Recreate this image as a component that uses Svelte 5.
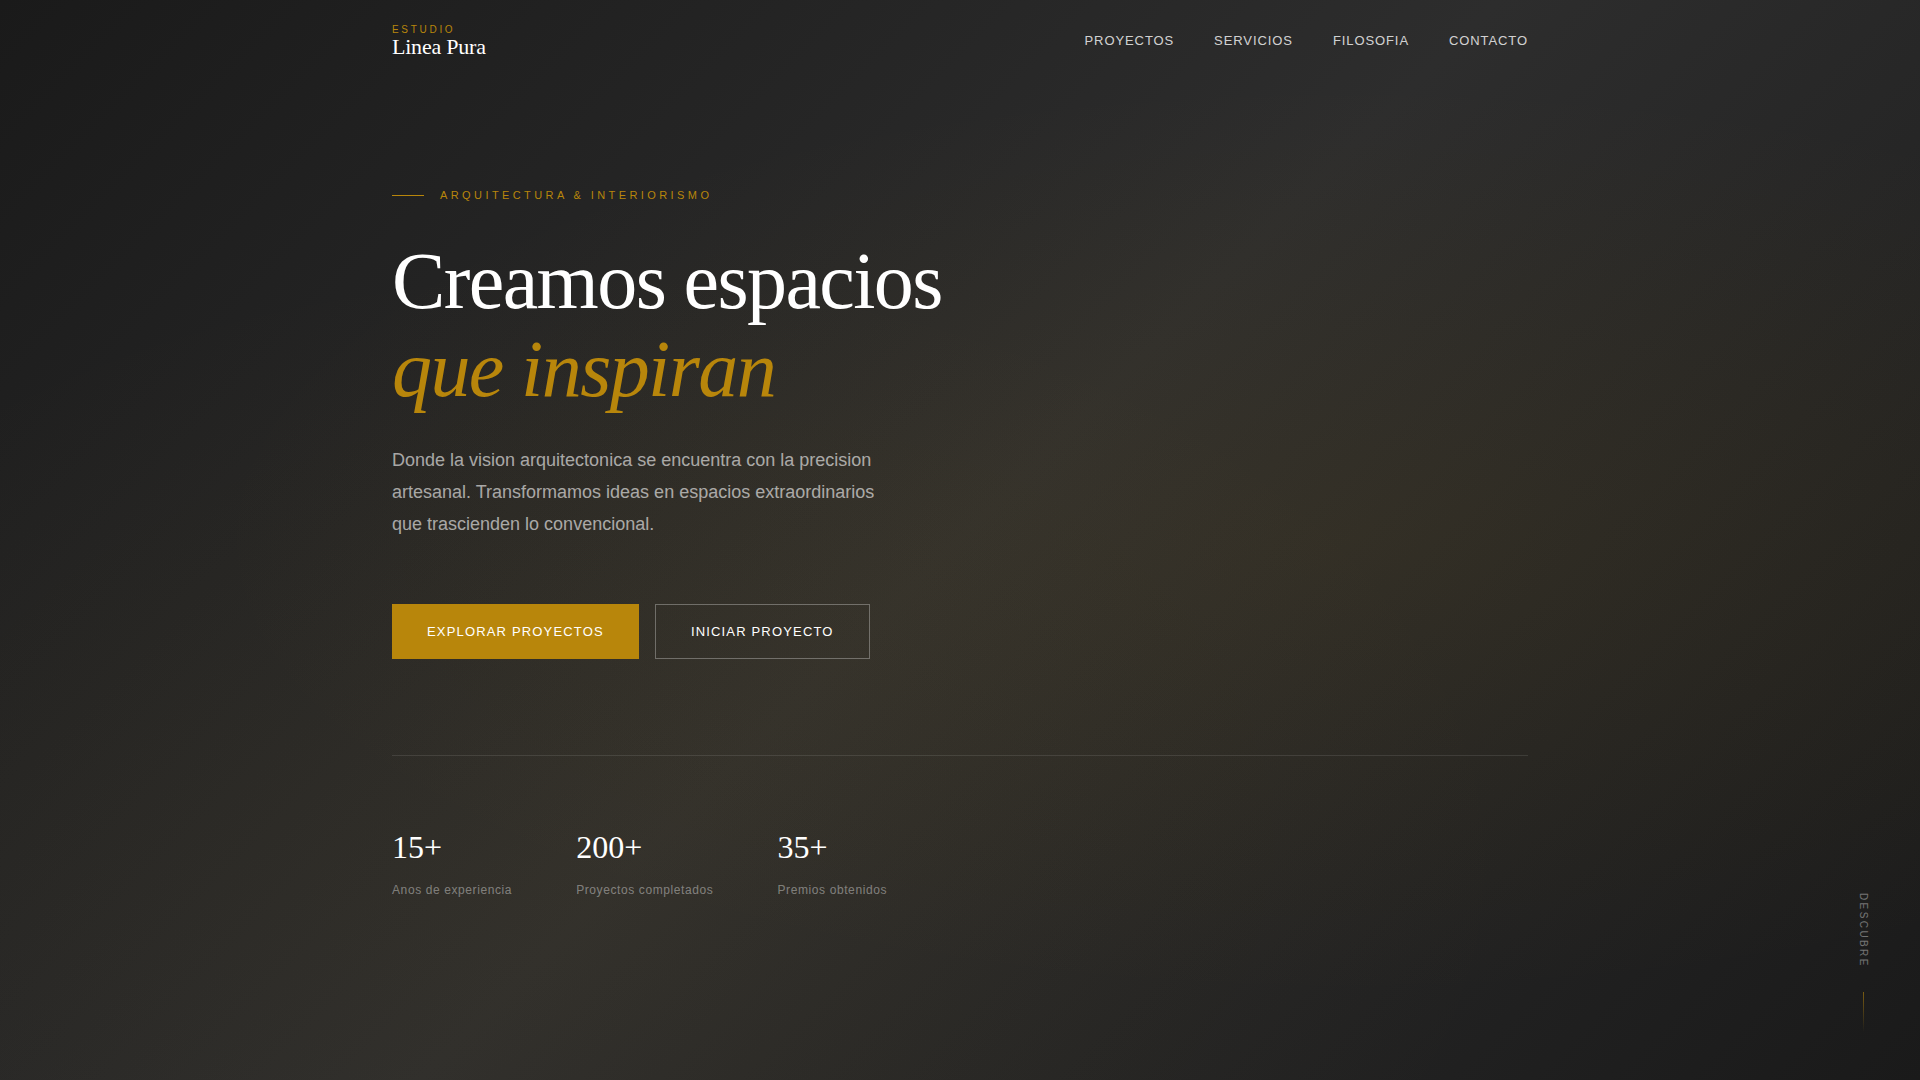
<script>
  const links = [
    { label: 'Proyectos', href: '#proyectos' },
    { label: 'Servicios', href: '#servicios' },
    { label: 'Filosofia', href: '#filosofia' },
    { label: 'Contacto', href: '#contacto' },
  ];

  const stats = [
    { value: '15+', label: 'Anos de experiencia' },
    { value: '200+', label: 'Proyectos completados' },
    { value: '35+', label: 'Premios obtenidos' },
  ];
</script>

<div class="page">
  <header class="bar">
    <a class="logo" href="#inicio">
      <span class="logo-over">Estudio</span>
      <span class="logo-name">Linea Pura</span>
    </a>
    <nav class="nav" aria-label="Principal">
      {#each links as link}
        <a href={link.href}>{link.label}</a>
      {/each}
    </nav>
  </header>

  <main class="hero" id="inicio">
    <p class="eyebrow">Arquitectura &amp; Interiorismo</p>
    <h1>Creamos espacios<br /><em>que inspiran</em></h1>
    <p class="lead">
      Donde la vision arquitectonica se encuentra con la precision artesanal.
      Transformamos ideas en espacios extraordinarios que trascienden lo convencional.
    </p>
    <div class="actions">
      <a class="btn primary" href="#proyectos">Explorar proyectos</a>
      <a class="btn outline" href="#contacto">Iniciar proyecto</a>
    </div>
    <dl class="stats">
      {#each stats as stat}
        <div class="stat">
          <dt>{stat.label}</dt>
          <dd>{stat.value}</dd>
        </div>
      {/each}
    </dl>
  </main>

  <div class="scroll">
    <span>Descubre</span>
    <i class="scroll-line"></i>
  </div>
</div>

<style>
  :global(body) {
    margin: 0;
    background: #1a1a1a;
  }

  .page {
    --gold: #b8860b;
    --serif: 'Liberation Serif', 'Times New Roman', serif;
    position: relative;
    display: flex;
    flex-direction: column;
    box-sizing: border-box;
    min-height: 100vh;
    color: #fff;
    font-family: 'Liberation Sans', Arial, sans-serif;
    background:
      radial-gradient(ellipse at 70% 50%, rgba(184, 134, 11, 0.08) 0%, transparent 60%),
      radial-gradient(ellipse at 30% 80%, rgba(184, 134, 11, 0.05) 0%, transparent 50%),
      linear-gradient(135deg, #1a1a1a 0%, #2d2d2d 50%, #1a1a1a 100%);
  }

  a {
    color: inherit;
    text-decoration: none;
  }

  .bar,
  .hero {
    box-sizing: border-box;
    width: 100%;
    max-width: 1200px;
    margin: 0 auto;
    padding: 0 32px;
  }

  .bar {
    display: flex;
    align-items: center;
    justify-content: space-between;
    padding-top: 24px;
    padding-bottom: 24px;
  }

  .logo {
    display: flex;
    flex-direction: column;
  }

  .logo-over {
    color: var(--gold);
    font-size: 10px;
    line-height: 12px;
    letter-spacing: 0.27em;
    text-transform: uppercase;
  }

  .logo-name {
    font-family: var(--serif);
    font-size: 22px;
    line-height: 22px;
    letter-spacing: -0.01em;
  }

  .nav {
    display: flex;
    gap: 40px;
    color: rgba(255, 255, 255, 0.8);
    font-size: 13px;
    line-height: 20px;
    letter-spacing: 0.07em;
    text-transform: uppercase;
  }

  .hero {
    display: flex;
    flex: 1;
    flex-direction: column;
    justify-content: center;
    padding-bottom: 77px;
  }

  .eyebrow {
    display: flex;
    align-items: center;
    gap: 16px;
    margin: 0 0 32px;
    color: var(--gold);
    font-size: 11px;
    line-height: 20px;
    letter-spacing: 0.31em;
    text-transform: uppercase;
  }

  .eyebrow::before {
    width: 32px;
    height: 1px;
    background: var(--gold);
    content: '';
  }

  h1 {
    margin: 0 0 31px;
    font-family: var(--serif);
    font-size: 80px;
    font-weight: 400;
    line-height: 88px;
    letter-spacing: -0.02em;
  }

  h1 em {
    color: var(--gold);
  }

  .lead {
    max-width: 496px;
    margin: 0 0 64px;
    color: rgba(255, 255, 255, 0.6);
    font-size: 18px;
    line-height: 32px;
  }

  .actions {
    display: flex;
    gap: 16px;
    margin-bottom: 96px;
  }

  .btn {
    display: flex;
    align-items: center;
    padding: 17px 35px;
    font-size: 13px;
    line-height: 19px;
    letter-spacing: 0.09em;
    text-transform: uppercase;
  }

  .primary {
    background: var(--gold);
  }

  .outline {
    border: 1px solid rgba(255, 255, 255, 0.3);
  }

  .stats {
    display: flex;
    gap: 64px;
    margin: 0;
    padding-top: 64px;
    border-top: 1px solid rgba(255, 255, 255, 0.1);
  }

  .stat {
    display: flex;
    flex-direction: column-reverse;
    gap: 6px;
  }

  dt {
    color: rgba(255, 255, 255, 0.4);
    font-size: 12px;
    line-height: 20px;
    letter-spacing: 0.05em;
  }

  dd {
    margin: 0;
    font-family: var(--serif);
    font-size: 32px;
    line-height: 54px;
  }

  .scroll {
    position: absolute;
    right: 48px;
    bottom: 48px;
    display: flex;
    flex-direction: column;
    align-items: center;
    gap: 24px;
    color: rgba(255, 255, 255, 0.4);
    font-size: 10px;
    line-height: 17px;
    letter-spacing: 0.24em;
    text-transform: uppercase;
  }

  .scroll span {
    writing-mode: vertical-rl;
  }

  .scroll-line {
    width: 1px;
    height: 40px;
    background: linear-gradient(to bottom, var(--gold), transparent);
    opacity: 0.6;
  }
</style>
